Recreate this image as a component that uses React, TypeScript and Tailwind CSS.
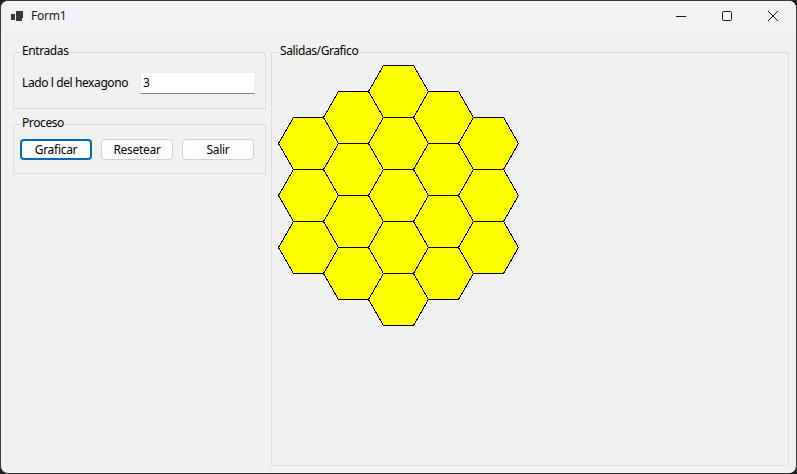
import React from "react";

const S = 30;
const H = 26;

function hexPoints(cx: number, cy: number) {
  return [
    [cx - S, cy],
    [cx - S / 2, cy - H],
    [cx + S / 2, cy - H],
    [cx + S, cy],
    [cx + S / 2, cy + H],
    [cx - S / 2, cy + H],
  ]
    .map((p) => p.join(","))
    .join(" ");
}

const hexes: [number, number][] = [];
const cols: { cx: number; ys: number[] }[] = [
  { cx: 308, ys: [143, 195, 247] },
  { cx: 353, ys: [117, 169, 221, 273] },
  { cx: 398, ys: [91, 143, 195, 247, 299] },
  { cx: 443, ys: [117, 169, 221, 273] },
  { cx: 488, ys: [143, 195, 247] },
];
cols.forEach((c) => c.ys.forEach((y) => hexes.push([c.cx, y])));

function GroupBox({
  title,
  className,
  children,
}: {
  title: string;
  className: string;
  children?: React.ReactNode;
}) {
  return (
    <div className={"relative border border-[#dcdcdc] " + className}>
      <span className="absolute left-[7px] top-[-10px] bg-[#f0f0f0] px-[1px] text-[12px] leading-[16px] tracking-[-0.4px] text-black">
        {title}
      </span>
      {children}
    </div>
  );
}

export default function App() {
  return (
    <div
      className="w-[797px] h-[474px] bg-[#1f1f1f] overflow-hidden"
      style={{ fontFamily: '"Noto Sans", "Open Sans", sans-serif' }}
    >
      <div className="w-full h-full flex flex-col rounded-[8px] border border-[#3a3a3a] overflow-hidden bg-[#f0f0f0]">
        {/* Title bar */}
        <div className="h-[30px] shrink-0 bg-[#f3f1f4] flex items-center">
          <svg width="12" height="11" viewBox="0 0 12 11" className="ml-[10px] mr-[8px]">
            <rect x="0" y="3" width="4" height="6" fill="#3a3a3a" />
            <path d="M5 0 H12 V7 H11 V10 H5 Z" fill="#3a3a3a" />
          </svg>
          <span className="text-[12px] text-[#1a1a1a] leading-none tracking-[-0.2px]">Form1</span>
          <div className="ml-auto flex h-full">
            <div className="w-[46px] h-full flex items-center justify-center">
              <svg width="10" height="10" viewBox="0 0 10 10">
                <line x1="0" y1="5.5" x2="10" y2="5.5" stroke="#1a1a1a" strokeWidth="1" />
              </svg>
            </div>
            <div className="w-[46px] h-full flex items-center justify-center">
              <svg width="10" height="10" viewBox="0 0 10 10">
                <rect x="0.5" y="0.5" width="9" height="9" rx="1.2" fill="none" stroke="#1a1a1a" strokeWidth="1" />
              </svg>
            </div>
            <div className="w-[46px] h-full flex items-center justify-center">
              <svg width="10" height="10" viewBox="0 0 10 10">
                <path d="M0 0 L10 10 M10 0 L0 10" stroke="#1a1a1a" strokeWidth="1" />
              </svg>
            </div>
          </div>
        </div>
        {/* Client area */}
        <div className="flex-1 flex pl-[12px] pt-[21px] gap-[5px]">
          <div className="w-[253px] flex flex-col gap-[15px]">
            <GroupBox title="Entradas" className="h-[57px]">
              <div className="flex items-center pl-[8px] pt-[19px]">
                <span className="text-[12px] tracking-[-0.4px] text-black w-[118px] whitespace-nowrap">Lado l del hexagono</span>
                <div className="w-[115px] h-[22px] bg-white border border-[#ececec] border-b-[#868686] flex items-center pl-[2px] text-[12px] text-black">
                  3
                </div>
              </div>
            </GroupBox>
            <GroupBox title="Proceso" className="h-[50px]">
              <div className="flex gap-[9px] pl-[6px] pt-[14px]">
                <button className="w-[72px] h-[21px] rounded-[4px] border-2 border-[#0067c0] bg-[#fdfdfd] text-[12px] tracking-[-0.3px] text-black leading-none">
                  Graficar
                </button>
                <button className="w-[72px] h-[21px] rounded-[4px] border border-[#d0d0d0] bg-[#fdfdfd] text-[12px] tracking-[-0.3px] text-black leading-none">
                  Resetear
                </button>
                <button className="w-[72px] h-[21px] rounded-[4px] border border-[#d0d0d0] bg-[#fdfdfd] text-[12px] tracking-[-0.3px] text-black leading-none">
                  Salir
                </button>
              </div>
            </GroupBox>
          </div>
          <GroupBox title="Salidas/Grafico" className="w-[518px] h-[414px]">
            <svg
              className="block w-full h-full"
              viewBox="272 53 516 412"
              shapeRendering="crispEdges"
            >
              <g transform="translate(0.5,0.5)">
                {hexes.map(([x, y], i) => (
                  <polygon key={i} points={hexPoints(x, y)} fill="#ffff00" stroke="#000" strokeWidth="1" />
                ))}
              </g>
            </svg>
          </GroupBox>
        </div>
      </div>
    </div>
  );
}
